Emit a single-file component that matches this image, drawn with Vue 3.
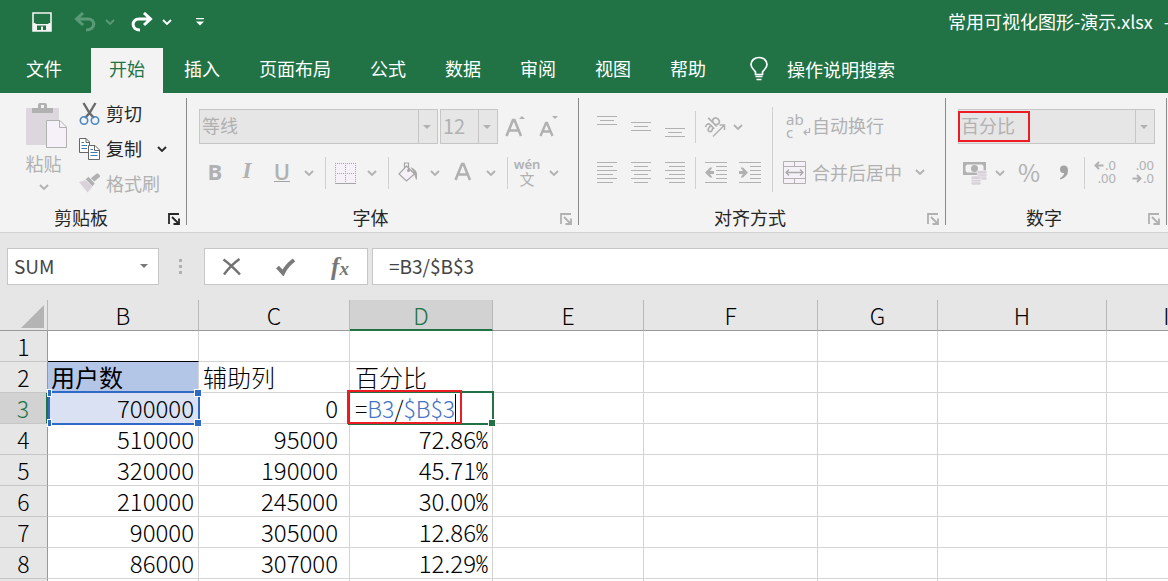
<script setup>
import { h, ref } from 'vue'

const Chevron = () =>
  h('svg', { width: 10, height: 6, viewBox: '0 0 10 6', 'aria-hidden': 'true' }, [
    h('path', { d: 'M1 1l4 4 4-4', fill: 'none', stroke: 'currentColor', 'stroke-width': 1.8 }),
  ])

const Launcher = () =>
  h('svg', { width: 12, height: 12, viewBox: '0 0 12 12', 'aria-hidden': 'true' }, [
    h('path', { d: 'M1 11V1H11M4 4l7 7M11 5.5V11H5.5', fill: 'none', stroke: 'currentColor', 'stroke-width': 1.8 }),
  ])

const Lines = (props) =>
  h(
    'svg',
    { width: props.w, height: 22, viewBox: `0 0 ${props.w} 22`, 'aria-hidden': 'true', 'shape-rendering': 'crispEdges' },
    [
      ...props.rows.map(([x, y, len]) => h('rect', { x, y, width: len, height: 1, fill: 'currentColor' })),
      props.arrow && h('path', { d: props.arrow, fill: 'currentColor', 'shape-rendering': 'auto' }),
    ],
  )
Lines.props = ['w', 'rows', 'arrow']

const vertical = [
  { name: '顶端对齐', rows: [[0, 0, 20], [3, 4, 14], [0, 8, 20]] },
  { name: '垂直居中', rows: [[0, 6, 20], [3, 10, 14], [0, 14, 20]] },
  { name: '底端对齐', rows: [[0, 12, 20], [3, 16, 14], [0, 20, 20]] },
]
const textRows = (x) => [0, 4, 8, 12, 16, 20].map((y, i) => (i % 2 ? [x, y, x === 3 ? 14 : 16] : [0, y, 20]))
const horizontal = [
  { name: '左对齐', rows: textRows(0) },
  { name: '居中', rows: textRows(3) },
  { name: '右对齐', rows: textRows(4) },
]
const indentRows = [[0, 0, 22], [11, 4, 11], [11, 8, 11], [11, 12, 11], [11, 16, 11], [0, 20, 22]]
const indents = [
  { name: '减少缩进量', arrow: 'M0 10.5L5 5.5H7.5L5 9H9V12H5L7.5 15.5H5Z' },
  { name: '增加缩进量', arrow: 'M9 10.5L4 5.5H1.5L4 9H0V12H4L1.5 15.5H4Z' },
]

const tabs = ['文件', '开始', '插入', '页面布局', '公式', '数据', '审阅', '视图', '帮助']
const activeTab = ref('开始')
const formula = ref('=B3/$B$3')
const columns = ['B', 'C', 'D', 'E', 'F', 'G', 'H', 'I']
const rows = [
  { n: 1 },
  { n: 2, B: '用户数', C: '辅助列', D: '百分比' },
  { n: 3, B: '700000', C: '0', edit: true },
  { n: 4, B: '510000', C: '95000', D: '72.86' },
  { n: 5, B: '320000', C: '190000', D: '45.71' },
  { n: 6, B: '210000', C: '245000', D: '30.00' },
  { n: 7, B: '90000', C: '305000', D: '12.86' },
  { n: 8, B: '86000', C: '307000', D: '12.29' },
  { n: '' },
]
</script>

<template>
  <div class="app">
    <header class="top">
      <div class="titlebar">
        <button class="q save" aria-label="保存">
          <svg width="20" height="20" viewBox="0 0 20 20"><path d="M1 1H19V19H1Z" fill="none" stroke="#f3f3f3" stroke-width="1.600" /><path d="M1 11H3L4 12H16L17 11H19V19H1Z" fill="#f3f3f3" /><path d="M5 13.500H14V18H11V14.500H9V18H5Z" fill="#217346" /></svg>
        </button>
        <button class="q undo" aria-label="撤消" disabled>
          <svg width="22" height="20" viewBox="0 0 22 20"><path d="M2 7H14C22 7 22 18 12 18M9 1L2.500 7L9 13" fill="none" stroke="currentColor" stroke-width="3" /></svg>
        </button>
        <button class="q small undo" aria-label="撤消选项" disabled><Chevron /></button>
        <button class="q redo" aria-label="恢复">
          <svg width="22" height="20" viewBox="0 0 22 20"><path d="M20 7H8C0 7 0 18 9 18M13 1L19.500 7L13 13" fill="none" stroke="currentColor" stroke-width="3" /></svg>
        </button>
        <button class="q small" aria-label="恢复选项"><Chevron /></button>
        <button class="q custom" aria-label="自定义快速访问工具栏">
          <svg width="8" height="8" viewBox="0 0 8 8"><path d="M0 0H8V1.200H0ZM0 3.500H8L4 7.500Z" fill="#fff" /></svg>
        </button>
        <div class="doc"><span>常用可视化图形-演示.xlsx</span><span>-</span></div>
      </div>
      <nav class="tabs">
        <button v-for="t in tabs" :key="t" class="tab" :class="{ active: t === activeTab, file: t === '文件' }" @click="activeTab = t">{{ t }}</button>
        <button class="tell">
          <svg width="20" height="26" viewBox="0 0 20 26"><path d="M6.500 18.500V16C5 13.500 2 12 2 8.500C2 4.500 5.500 1.500 10 1.500S18 4.500 18 8.500C18 12 15 13.500 13.500 16V18.500ZM6.500 20.500H13.500M7.500 23.500H12.500" fill="none" stroke="#fff" stroke-width="1.700" /></svg>
          <span>操作说明搜索</span>
        </button>
      </nav>
    </header>

    <section class="ribbon">
      <div class="group">
        <div class="body clip">
          <button class="paste" disabled>
            <svg width="42" height="47" viewBox="0 0 42 47"><rect x="0" y="5" width="33" height="37" rx="1" fill="#dcd7dc" /><path d="M6 5H12V2Q12 0 14 0H19Q21 0 21 2V5H27V10H6Z" fill="#b1b1b1" /><rect x="15" y="2" width="3" height="3" fill="#f3f3f3" /><path d="M20.500 17.500H34L40.500 24V44.500H20.500Z" fill="#f6f1f8" stroke="#b1b1b1" /><path d="M33.500 17.500V24.500H40.500" fill="none" stroke="#b1b1b1" /></svg>
            <span>粘贴</span>
            <Chevron />
          </button>
          <div class="cliplist">
            <button class="cmd on">
              <svg width="20" height="24" viewBox="0 0 20 24"><path d="M4 1L10 11L14.500 16M16 1L10 11L5.500 16" fill="none" stroke="#6a6a6a" stroke-width="2.400" /><circle cx="4.500" cy="18.500" r="3.700" fill="none" stroke="#4a88c2" stroke-width="1.600" /><circle cx="15.500" cy="18.500" r="3.700" fill="none" stroke="#4a88c2" stroke-width="1.600" /></svg>
              <span>剪切</span>
            </button>
            <button class="cmd on">
              <svg width="21" height="22" viewBox="0 0 21 22"><path d="M.500.500H7L10.500 4V14.500H.500Z" fill="#fff" stroke="#666" /><path d="M7 .500V4.500H10.500" fill="none" stroke="#666" /><path d="M2.500 4.500H5M2.500 7.500H8M2.500 10.500H8" stroke="#3d7ab5" /><path d="M9.500 7.500H16L20.500 12V21.500H9.500Z" fill="#fff" stroke="#666" /><path d="M15.500 7.500V12.500H20.500" fill="none" stroke="#666" /><path d="M11.500 11.500H14M11.500 14.500H18.500M11.500 17.500H18.500" stroke="#3d7ab5" /></svg>
              <span>复制</span>
              <Chevron class="after" />
            </button>
            <button class="cmd" disabled>
              <svg width="22" height="21" viewBox="0 0 22 21"><path d="M0 9L7 7L14 14L9 20Z" fill="#d9d2d9" /><path d="M7 6L10 3.500L16.500 10.500L14 13.500ZM12.500 5L18.500 0H20L22 2V3.500L16 8.500Z" fill="#b1b1b1" /></svg>
              <span>格式刷</span>
            </button>
          </div>
        </div>
        <div class="foot on"><h2>剪贴板</h2><button aria-label="剪贴板设置"><Launcher /></button></div>
      </div>
      <i class="sep"></i>

      <div class="group">
        <div class="body font">
          <div class="row">
            <label class="combo family"><select aria-label="字体" disabled><option>等线</option></select></label>
            <label class="combo size"><select aria-label="字号" disabled><option>12</option></select></label>
            <button class="b32" aria-label="增大字号" disabled>
              <svg width="22" height="24" viewBox="0 0 22 24"><path d="M1.500 21L8 5H9.500L16 21M4 15.500H13.500" fill="none" stroke="currentColor" stroke-width="2.600" /><path d="M14 4H20L17 1Z" fill="currentColor" /></svg>
            </button>
            <button class="b32" aria-label="减小字号" disabled>
              <svg width="20" height="24" viewBox="0 0 20 24"><path d="M2.500 21L8 8H9L14.500 21M4.500 16.500H12.500" fill="none" stroke="currentColor" stroke-width="2.400" /><path d="M14 1H20L17 4Z" fill="currentColor" /></svg>
            </button>
          </div>
          <div class="row two">
            <button class="b32 bold" disabled>B</button>
            <button class="b32 italic" disabled>I</button>
            <button class="b38 under" disabled><span>U</span></button>
            <button class="b16" aria-label="下划线选项" disabled><Chevron /></button>
            <i class="div wide"></i>
            <button class="b38" aria-label="边框" disabled>
              <svg width="21" height="21" viewBox="0 0 21 21" shape-rendering="crispEdges"><rect width="21" height="21" fill="#f6f1f8" /><path d="M0 .500H21M0 10.500H21M.500 0V20M10.500 0V20M20.500 0V20" stroke="#a5a5a5" stroke-dasharray="1 1" /><path d="M0 20.500H21" stroke="#a5a5a5" /></svg>
            </button>
            <button class="b16" aria-label="边框选项" disabled><Chevron /></button>
            <i class="div wide"></i>
            <button class="b38" aria-label="填充颜色" disabled>
              <svg width="20" height="22" viewBox="0 0 20 22"><path d="M8.500 4L16.500 12L8.500 19L1 12Z" fill="#f6f1f8" stroke="#a5a5a5" stroke-width="1.200" /><path d="M6.500 6V1H10.500V8" fill="none" stroke="#a5a5a5" stroke-width="1.200" /><circle cx="10.500" cy="8.500" r="1.500" fill="#a5a5a5" /><path d="M12.500 5Q19 8 19 12V18Q17 17 16.500 12Z" fill="#a9a9a9" /></svg>
            </button>
            <button class="b16" aria-label="填充颜色选项" disabled><Chevron /></button>
            <button class="b40" aria-label="字体颜色" disabled>
              <svg width="18" height="24" viewBox="0 0 18 24"><path d="M1.500 19L8 3H9.500L16 19M4 13.500H13.500" fill="none" stroke="currentColor" stroke-width="2.600" /></svg>
            </button>
            <button class="b16" aria-label="字体颜色选项" disabled><Chevron /></button>
            <i class="div wide"></i>
            <button class="b38 wen" disabled><small>wén</small><span>文</span></button>
            <button class="b16" aria-label="拼音选项" disabled><Chevron /></button>
          </div>
        </div>
        <div class="foot"><h2>字体</h2><button aria-label="字体设置" disabled><Launcher /></button></div>
      </div>
      <i class="sep"></i>

      <div class="group">
        <div class="body align">
          <div class="left">
            <div class="row">
              <button v-for="b in vertical" :key="b.name" class="b34" :aria-label="b.name" disabled><Lines :w="20" :rows="b.rows" /></button>
              <i class="div near"></i>
              <button class="b32" aria-label="方向" disabled>
                <svg width="22" height="22" viewBox="0 0 22 22"><g transform="translate(6 17) rotate(-45)" fill="none" stroke="currentColor" stroke-width="1.700"><path d="M1 -7.500Q6 -9.500 6 -5.500V0M6 -4.500Q0 -5 .500 -2Q1.500 1.500 6 -2" /><path d="M9.500 -12V0M9.500 -5Q10.500 -8 13 -7.500Q15.500 -7 15.500 -4Q15.500 -.800 13 -.600Q10.500 -.500 9.500 -3" /></g><path d="M9 20.500L20 9.500M15.500 9H20.500V14" fill="none" stroke="currentColor" stroke-width="1.500" /></svg>
              </button>
              <button class="b14" aria-label="方向选项" disabled><Chevron /></button>
            </div>
            <div class="row two">
              <button v-for="b in horizontal" :key="b.name" class="b34" :aria-label="b.name" disabled><Lines :w="20" :rows="b.rows" /></button>
              <i class="div near"></i>
              <button v-for="b in indents" :key="b.name" class="b34" :aria-label="b.name" disabled><Lines :w="22" :rows="indentRows" :arrow="b.arrow" /></button>
            </div>
          </div>
          <i class="tall"></i>
          <div class="right">
            <button class="row cmd" disabled>
              <span class="abc"><span>ab</span><span>c<svg width="8" height="8" viewBox="0 0 8 8"><path d="M6.500 0V4.500H1M3.500 2L1 4.500L3.500 7" fill="none" stroke="currentColor" stroke-width="1.200" /></svg></span></span>
              <span>自动换行</span>
            </button>
            <button class="row two cmd" disabled>
              <svg width="24" height="23" viewBox="0 0 24 23"><path d="M.500.500H22.500V22.500H.500ZM.500 5.500H22.500M.500 17.500H22.500M11.500.500V5.500M11.500 17.500V22.500" fill="#f6f1f8" stroke="#b1b1b1" /><path d="M3 11.500H20M6 8.500L3 11.500L6 14.500M17 8.500L20 11.500L17 14.500" fill="none" stroke="#a9a9a9" stroke-width="1.300" /></svg>
              <span>合并后居中</span>
              <Chevron class="after" />
            </button>
          </div>
        </div>
        <div class="foot"><h2>对齐方式</h2><button aria-label="对齐设置" disabled><Launcher /></button></div>
      </div>
      <i class="sep"></i>

      <div class="group">
        <div class="body number">
          <div class="row">
            <label class="combo format"><select aria-label="数字格式" disabled><option>百分比</option></select><i class="mark"></i></label>
          </div>
          <div class="row two">
            <button class="b34" aria-label="会计数字格式" disabled>
              <svg width="24" height="23" viewBox="0 0 24 23"><rect width="23" height="13" fill="#b1b1b1" /><path d="M4 2.500H19L20.500 4V9L19 10.500H4L2.500 9V4Z" fill="#f3f3f3" /><circle cx="11.500" cy="6.500" r="3.500" fill="#b1b1b1" /><g fill="#d9d2d9" stroke="#f3f3f3" stroke-width=".6"><rect x="14" y="14.500" width="10" height="3.500" rx="1.700" /><rect x="14" y="11.500" width="10" height="3.500" rx="1.700" /><rect x="14" y="8.500" width="10" height="3.500" rx="1.700" /><rect x="8" y="19.500" width="10" height="3.500" rx="1.700" /><rect x="8" y="16.500" width="10" height="3.500" rx="1.700" /><rect x="8" y="14" width="10" height="3.500" rx="1.700" /></g></svg>
            </button>
            <button class="b16" aria-label="会计格式选项" disabled><Chevron /></button>
            <button class="b42 pct" disabled>%</button>
            <button class="b28" aria-label="千位分隔样式" disabled>
              <svg width="10" height="18" viewBox="0 0 10 18"><path d="M1 14Q5 12 5 9Q1 9.500 1 5Q1 1.500 4.800 1.500Q9 1.500 9 6.500Q9 13 1.500 15.500Z" fill="#a3a3a3" /></svg>
            </button>
            <i class="div mid"></i>
            <button class="b40 dec" disabled>
              <span><svg width="10" height="9" viewBox="0 0 10 9"><path d="M9.500 4.500H2M5 1L1.500 4.500L5 8" fill="none" stroke="currentColor" stroke-width="2" /></svg>.0</span><span>.00</span>
            </button>
            <button class="b30 dec" disabled>
              <span>.00</span><span><svg width="10" height="9" viewBox="0 0 10 9"><path d="M.500 4.500H8M5 1L8.500 4.500L5 8" fill="none" stroke="currentColor" stroke-width="2" /></svg>.0</span>
            </button>
          </div>
        </div>
        <div class="foot"><h2>数字</h2><button aria-label="数字设置" disabled><Launcher /></button></div>
      </div>
      <i class="sep"></i>
    </section>

    <section class="fbar">
      <label class="namebox"><select aria-label="名称框"><option>SUM</option></select></label>
      <span class="dots"><i></i><i></i><i></i></span>
      <div class="fbtns">
        <button aria-label="取消"><svg width="20" height="18" viewBox="0 0 20 18"><path d="M1.500 1.500Q8 6 18 16.500M17.500 1Q9 7 2 16.500" fill="none" stroke="#737373" stroke-width="2.500" /></svg></button>
        <button aria-label="输入"><svg width="20" height="18" viewBox="0 0 20 18"><path d="M1.500 9L7 15Q10 8 18 2" fill="none" stroke="#7a7a7a" stroke-width="4" /></svg></button>
        <button class="fx" aria-label="插入函数">f<small>x</small></button>
      </div>
      <input v-model="formula" class="formula" aria-label="编辑栏" />
    </section>

    <main class="sheet">
      <table>
        <colgroup>
          <col class="ch" /><col class="c151" /><col class="c151" /><col class="c143" /><col class="c151" /><col class="c174" /><col class="c120" /><col class="c169" /><col class="c120" />
        </colgroup>
        <thead>
          <tr>
            <th class="corner" aria-label="全选"><svg width="23" height="23" viewBox="0 0 23 23"><path d="M23 0V23H0Z" fill="#b4b4b4" /></svg></th>
            <th v-for="c in columns" :key="c" :class="{ cur: c === 'D' }" scope="col">{{ c }}</th>
          </tr>
        </thead>
        <tbody>
          <tr v-for="(r, i) in rows" :key="i">
            <th scope="row" :class="{ cur: r.n === 3 }">{{ r.n }}</th>
            <td :class="{ num: r.n > 2, above: r.n === 1, head: r.n === 2, ref: r.n === 3 }">
              {{ r.B }}
              <div v-if="r.edit" class="range"><i class="k tl"></i><i class="k tr"></i><i class="k bl"></i><i class="k br"></i></div>
            </td>
            <td class="colc" :class="{ num: r.n > 2 }">{{ r.C }}</td>
            <td class="cold" :class="{ num: r.n > 3 }">
              <template v-if="r.edit">
                <span class="edit">=<b>B3</b>/<b>$B$3</b></span>
                <div class="cell"><i></i></div>
                <div class="redbox"></div>
              </template>
              <template v-else>{{ r.D }}<span v-if="r.n > 3" class="percent">%</span></template>
            </td>
            <td v-for="c in 5" :key="c"></td>
          </tr>
        </tbody>
      </table>
    </main>
  </div>
</template>

<style>
body { margin: 0; overflow: hidden; }
</style>

<style scoped>
.app {
  height: 100vh;
  display: flex;
  flex-direction: column;
  overflow: hidden;
  background: #e6e6e6;
  font-family: "Noto Sans CJK SC", sans-serif;
  font-size: 18px;
  font-weight: 400;
  line-height: 27px;
  color: #262626;
}
*, *::before, *::after { box-sizing: border-box; }
button, select, input { font: inherit; color: inherit; background: none; border: 0; padding: 0; margin: 0; border-radius: 0; }
button { display: flex; align-items: center; justify-content: center; flex: none; white-space: nowrap; }
svg { flex: none; display: block; }
i { display: block; flex: none; }
.top { background: #217346; color: #fff; flex: none; }
.titlebar { display: flex; align-items: center; height: 48px; padding: 0 0 5px 31px; overflow: hidden; }
.q { width: 22px; height: 32px; }
.q.small { width: 16px; margin-left: 6px; }
.undo { color: #5a9a77; }
.save { margin-right: 21px; }
.redo { margin-left: 13px; }
.custom { margin-left: 14px; }
.doc { margin-left: auto; margin-right: -2px; display: flex; gap: 11px; white-space: nowrap; }
.tabs { display: flex; height: 45px; gap: 3px; padding-left: 8px; }
.tab { padding: 0 18px 4px; }
.tab.file { margin-right: 8px; }
.tab.active { background: #f3f3f3; color: #217346; }
.tell { gap: 18px; margin-left: 22px; padding-bottom: 3px; }

.ribbon { display: flex; flex: none; height: 140px; background: #f3f3f3; border-bottom: 1px solid #d2d2d2; }
.ribbon button:disabled { color: #b1b1b1; }
.sep { width: 1px; margin: 5px 0 7px; background: #8a8a8a; }
.group { display: flex; flex-direction: column; flex: none; }
.body { height: 112px; }
.foot { display: flex; height: 27px; align-items: center; }
.foot h2 { flex: 1; margin: 0; padding-bottom: 3px; font: inherit; text-align: center; }
.foot button { width: 24px; height: 24px; }
.clip { display: flex; padding: 10px 19px 0 22px; gap: 14px; }
.paste { flex-direction: column; width: 43px; justify-content: flex-start; height: 90px; }
.paste svg:first-child { margin-left: 7px; }
.paste span { margin-bottom: 7px; }
.cliplist { display: flex; flex-direction: column; margin-top: -6px; }
.cmd { height: 35px; justify-content: flex-start; gap: 6px; padding-bottom: 2px; }
.cmd svg:first-child { width: 21px; }
.cliplist .after { margin-left: 9px; }
.row { display: flex; align-items: center; height: 35px; }
.row.two { height: 32px; margin-top: 13px; }
.row > button { height: 32px; }
.font { padding: 16px 14px 0 12px; }
.align { display: flex; padding: 16px 20px 0 11px; }
.number { padding: 16px 11px 0 12px; }
.combo { position: relative; display: block; height: 35px; border: 1px solid #c6c6c6; background: #e6e6e6; color: #b1b1b1; }
.combo select, .namebox select { appearance: none; width: 100%; height: 100%; opacity: 1; display: block; }
.combo select { padding: 0 20px 3px 2px; }
.combo::before { content: ""; position: absolute; right: 18px; top: 0; bottom: 0; width: 1px; background: #c6c6c6; }
.combo::after, .namebox::after { content: ""; position: absolute; right: 6px; top: 15px; border: 4px solid transparent; border-top-color: #b1b1b1; border-bottom: 0; }
.combo.family { width: 239px; margin-right: 2px; }
.combo.size { width: 58px; margin-right: 2px; font-size: 20px; }
.combo.format { flex: 1; }
.mark { position: absolute; left: -1px; top: 1px; width: 72px; height: 31px; border: 2px solid #ed1c24; }
.b14 { width: 14px; }
.b16 { width: 16px; }
.b28 { width: 28px; }
.b30 { width: 30px; }
.b32 { width: 32px; }
.b34 { width: 34px; }
.b38 { width: 38px; }
.b40 { width: 40px; }
.b42 { width: 42px; }
.div { width: 1px; height: 32px; background: #d0d0d0; }
.div.wide { margin-left: 8px; }
.div.mid { margin-left: 6px; }
.div.near { margin: 0 3px; }
.tall { width: 1px; height: 85px; margin: -2px 10px 0 5px; background: #d0d0d0; }
.ribbon .bold, .ribbon .italic, .ribbon .under { font: 700 22px/26px "Open Sans", sans-serif; color: #a3a3a3; padding-bottom: 4px; }
.ribbon .italic { font: italic 700 23px/26px "Liberation Serif", serif; }
.ribbon .under { font-weight: 600; }
.under span { border-bottom: 1px solid #a3a3a3; line-height: 20px; }
.wen { flex-direction: column; padding-bottom: 3px; }
.wen small { font: 600 13px/14px "Noto Sans", sans-serif; }
.wen span { font-size: 15px; line-height: 16px; }
.right .cmd { gap: 5px; }
.right .row:first-child { height: 35px; }
.right .two { height: 32px; }
.right .cmd svg:first-child { width: 24px; }
.right .after { margin-left: 8px; }
.abc { display: flex; flex-direction: column; width: 24px; padding-left: 3px; font: 400 15px/13px "Noto Sans", sans-serif; text-align: left; }
.abc > span { display: flex; gap: 2px; align-items: center; }
.ribbon .pct { font: 400 24px/28px "Noto Sans CJK SC", sans-serif; padding-bottom: 2px; }
.ribbon .dec { flex-direction: column; align-items: flex-end; font: 400 13px/13px "Noto Sans", sans-serif; color: #a3a3a3; padding-bottom: 2px; }
.dec.b40 { padding-right: 9px; }
.dec.b30 { padding-right: 1px; }
.dec span { display: flex; align-items: center; gap: 1px; }

.fbar { display: flex; flex: none; height: 67px; padding: 15px 0 15px 7px; color: #444; font-size: 19px; }
.namebox { position: relative; width: 152px; border: 1px solid #c6c6c6; background: #fff; }
.namebox select { padding: 0 24px 3px 6px; }
.namebox::after { right: 10px; border-top-color: #777; }
.dots { display: flex; flex-direction: column; gap: 3px; justify-content: center; margin: 0 22px 0 20px; width: 3px; }
.dots i { width: 3px; height: 3px; background: #b1b1b1; }
.fbtns { display: flex; width: 164px; border: 1px solid #c6c6c6; background: #fff; }
.fbtns button { flex: 1; }
.fx { font: italic 700 25px/30px "Liberation Serif", serif; color: #777; }
.fx small { font-size: 19px; line-height: 30px; padding-top: 4px; }
.formula { flex: 1; min-width: 0; margin-left: 4px; padding: 0 0 3px 16px; border: 1px solid #c6c6c6; border-right: 0; background: #fff; outline: 0; }

.sheet { flex: 1; min-height: 0; overflow: hidden; background: #fff; }
table { table-layout: fixed; width: 1227px; border-collapse: separate; border-spacing: 0; font-size: 23px; font-weight: 300; line-height: 28px; color: #000; }
.ch { width: 48px; }
.c120 { width: 120px; }
.c143 { width: 143px; }
.c151 { width: 151px; }
.c169 { width: 169px; }
.c174 { width: 174px; }
th, td { height: 31px; padding: 0; border-right: 1px solid #d4d4d4; border-bottom: 1px solid #d4d4d4; white-space: nowrap; }
th { background: #e6e6e6; font-weight: 300; }
thead th { border-color: #b8b8b8 #b8b8b8 #999; }
tbody th { border-right-color: #999; border-bottom-color: #c6c6c6; }
th.cur { background: #d2d2d2; color: #217346; }
thead .cur { border-bottom: 2px solid #217346; }
tbody .cur { border-right: 2px solid #217346; }
.corner svg { margin: 2px 0 0 21px; }
td { position: relative; padding: 0 4px 0 3px; text-align: left; }
.num { text-align: right; font-size: 24px; }
td.colc { padding-right: 11px; padding-left: 4px; }
td.cold { padding-left: 5px; padding-right: 4px; }
td.above { border-bottom-color: #000; }
td.head { background: #b4c6e7; font-weight: 400; }
.head, .head ~ td { font-size: 24px; }
td.ref { background: #d9e1f2; }
.percent { font-feature-settings: "hwid"; }
.edit { position: relative; z-index: 3; display: inline-block; border-right: 1px solid #000; }
.edit b { font-weight: 300; color: #4472c4; }
.range { position: absolute; inset: -2px -2px -2px 0; border: 2px solid #2f69c6; z-index: 1; }
.k { position: absolute; width: 6px; height: 6px; background: #2f69c6; outline: 1px solid #fff; }
.tl, .bl { left: -2px; width: 3px; }
.tr, .br { right: -3px; }
.tl, .tr { top: -3px; }
.bl, .br { bottom: -3px; }
.cell { position: absolute; inset: -2px -2px -2px -2px; border: 2px solid #217346; z-index: 1; }
.cell i { position: absolute; right: -3px; bottom: -3px; width: 6px; height: 6px; background: #217346; outline: 1px solid #fff; }
.redbox { position: absolute; left: -3px; top: -3px; width: 115px; height: 34px; border: 2px solid #ed1c24; z-index: 2; }
</style>
